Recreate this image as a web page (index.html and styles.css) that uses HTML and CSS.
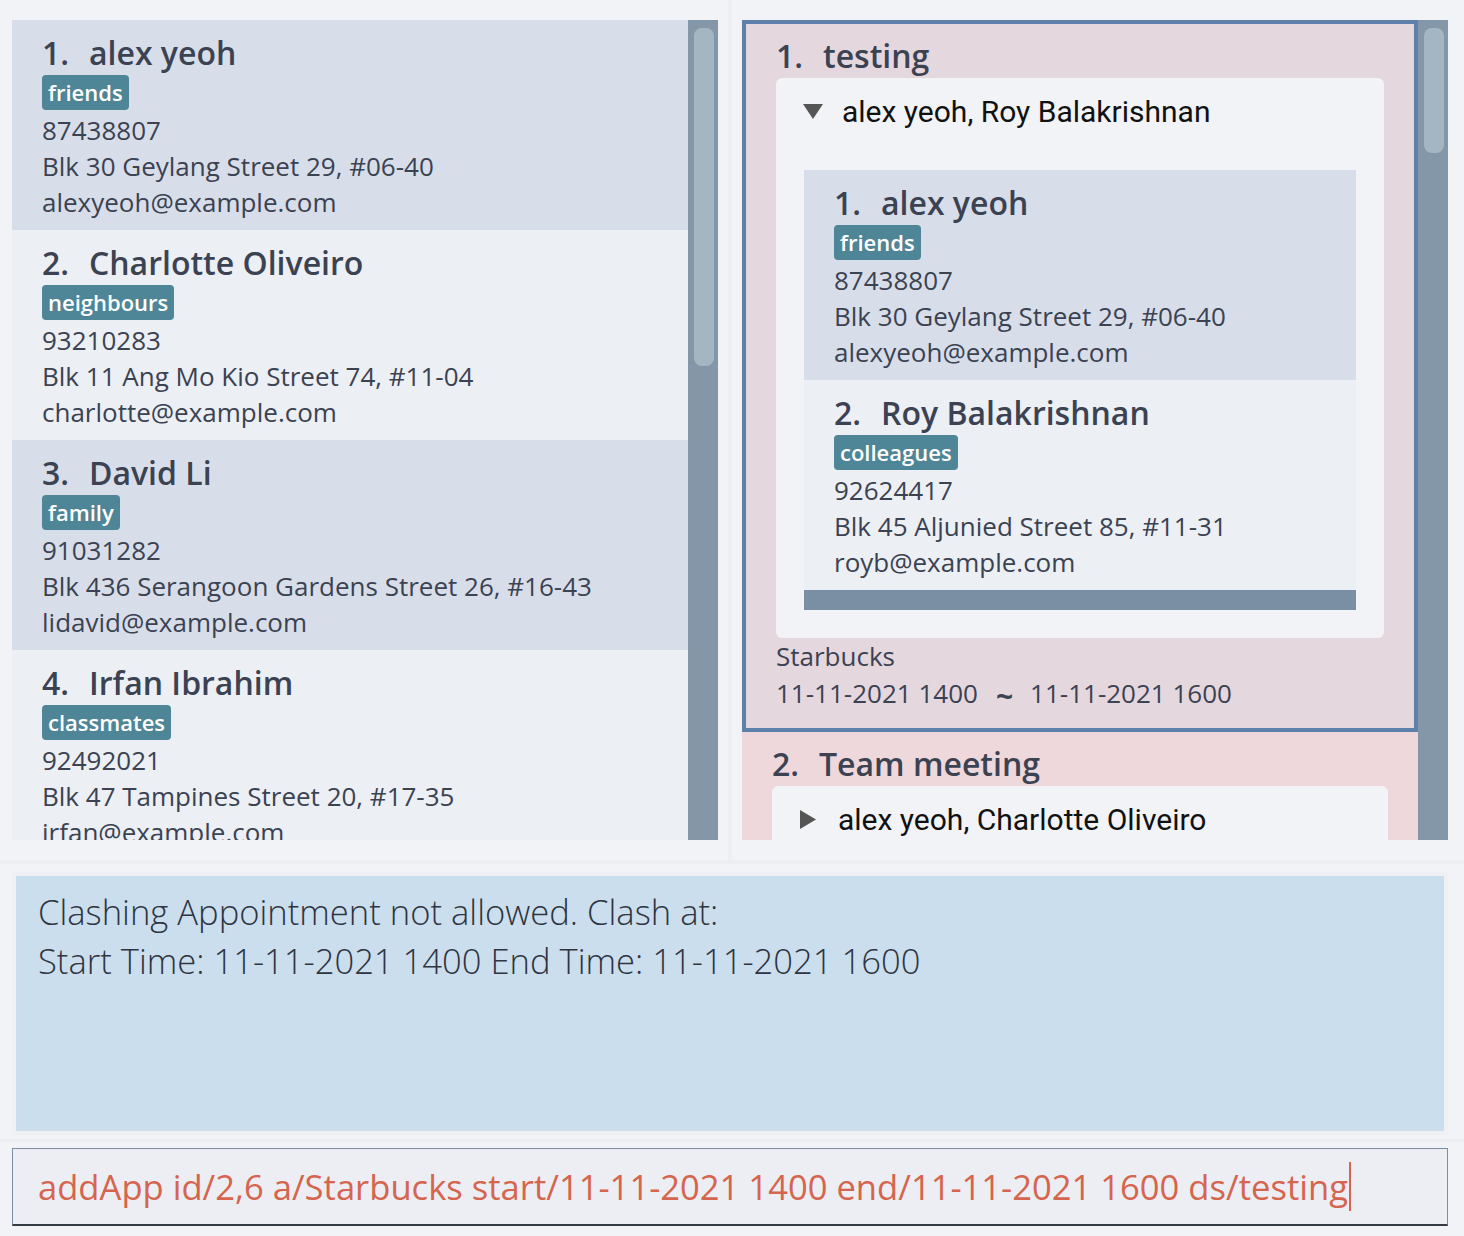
FILE: index.html
```html
<!DOCTYPE html>
<html>
<head>
<meta charset="utf-8">
<link rel="stylesheet" href="styles.css">
</head>
<body>
<div class="app">
  <div class="top">
    <div class="pane">
      <div class="list">
        <div class="card dark">
          <div class="name"><span class="idx">1.</span><span>alex yeoh</span></div>
          <span class="tag">friends</span>
          <div class="field">87438807</div>
          <div class="field">Blk 30 Geylang Street 29, #06-40</div>
          <div class="field">alexyeoh@example.com</div>
        </div>
        <div class="card light">
          <div class="name"><span class="idx">2.</span><span>Charlotte Oliveiro</span></div>
          <span class="tag">neighbours</span>
          <div class="field">93210283</div>
          <div class="field">Blk 11 Ang Mo Kio Street 74, #11-04</div>
          <div class="field">charlotte@example.com</div>
        </div>
        <div class="card dark">
          <div class="name"><span class="idx">3.</span><span>David Li</span></div>
          <span class="tag">family</span>
          <div class="field">91031282</div>
          <div class="field">Blk 436 Serangoon Gardens Street 26, #16-43</div>
          <div class="field">lidavid@example.com</div>
        </div>
        <div class="card light">
          <div class="name"><span class="idx">4.</span><span>Irfan Ibrahim</span></div>
          <span class="tag">classmates</span>
          <div class="field">92492021</div>
          <div class="field">Blk 47 Tampines Street 20, #17-35</div>
          <div class="field">irfan@example.com</div>
        </div>
      </div>
      <div class="vscroll"><div class="thumb thumb-left"></div></div>
    </div>
    <div class="divider"></div>
    <div class="pane">
      <div class="list">
        <div class="appt selected">
          <div class="appt-title"><span class="idx">1.</span><span>testing</span></div>
          <div class="group">
            <div class="group-head">
              <svg class="tri-down" width="20" height="15" viewBox="0 0 20 15"><polygon points="0,0 20,0 10,15" fill="#555"/></svg>
              <span class="members">alex yeoh, Roy Balakrishnan</span>
            </div>
            <div class="nested">
              <div class="card dark">
                <div class="name"><span class="idx">1.</span><span>alex yeoh</span></div>
                <span class="tag">friends</span>
                <div class="field">87438807</div>
                <div class="field">Blk 30 Geylang Street 29, #06-40</div>
                <div class="field">alexyeoh@example.com</div>
              </div>
              <div class="card light">
                <div class="name"><span class="idx">2.</span><span>Roy Balakrishnan</span></div>
                <span class="tag">colleagues</span>
                <div class="field">92624417</div>
                <div class="field">Blk 45 Aljunied Street 85, #11-31</div>
                <div class="field">royb@example.com</div>
              </div>
              <div class="hscroll"></div>
            </div>
          </div>
          <div class="appt-line">Starbucks</div>
          <div class="appt-line">11-11-2021 1400<span class="tilde">~</span>11-11-2021 1600</div>
        </div>
        <div class="appt second">
          <div class="appt-title"><span class="idx">2.</span><span>Team meeting</span></div>
          <div class="group">
            <div class="group-head">
              <svg class="tri-right" width="16" height="19" viewBox="0 0 16 19"><polygon points="0,0 16,9.5 0,19" fill="#555"/></svg>
              <span class="members">alex yeoh, Charlotte Oliveiro</span>
            </div>
          </div>
        </div>
      </div>
      <div class="vscroll"><div class="thumb thumb-right"></div></div>
    </div>
  </div>
  <div class="hdivider"></div>
  <div class="result-wrap">
    <div class="result">
      <div>Clashing Appointment not allowed. Clash at:</div>
      <div>Start Time: 11-11-2021 1400 End Time: 11-11-2021 1600</div>
    </div>
  </div>
  <div class="hdivider2"></div>
  <div class="cmd">
    <span class="cmd-text">addApp id/2,6 a/Starbucks start/11-11-2021 1400 end/11-11-2021 1600 ds/testing</span><span class="caret"></span>
  </div>
</div>
</body>
</html>
```

FILE: styles.css
```css
html, body {
  margin: 0;
  padding: 0;
}
body {
  background: #f2f3f7;
  font-family: "Open Sans", "Noto Sans", sans-serif;
  color: #3b4252;
}
.app {
  width: 1464px;
  height: 1236px;
  overflow: hidden;
}
.top {
  display: flex;
  height: 860px;
  padding-left: 12px;
  box-sizing: border-box;
}
.pane {
  display: flex;
  width: 706px;
  height: 820px;
  margin-top: 20px;
}
.list {
  width: 676px;
  height: 820px;
  overflow: hidden;
}
.vscroll {
  width: 30px;
  height: 820px;
  background: #8497a9;
  padding: 8px 4px 0 6px;
  box-sizing: border-box;
}
.thumb {
  background: #a5b6c3;
  border-radius: 8px;
}
.thumb-left { height: 338px; }
.thumb-right { height: 125px; }
.divider {
  width: 4px;
  margin: 0 10px;
  background: #eceef3;
}

/* person card */
.card {
  height: 210px;
  box-sizing: border-box;
  padding: 12px 30px 0;
  color: #3b4252;
}
.card.dark { background: #d8dee9; }
.card.light { background: #eceff4; }
.name {
  display: flex;
  font-size: 32px;
  font-weight: 600;
  line-height: 42px;
  height: 42px;
  white-space: nowrap;
}
.idx {
  display: inline-block;
  width: 47px;
}
.tag {
  display: inline-block;
  margin-top: 1px;
  margin-bottom: 2px;
  height: 35px;
  line-height: 35px;
  padding: 0 6px;
  background: #4e8597;
  color: #ffffff;
  font-size: 22px;
  font-weight: 600;
  border-radius: 4px;
  vertical-align: top;
}
.field {
  font-size: 26px;
  line-height: 36px;
  white-space: nowrap;
}

/* appointments */
.appt {
  padding: 0 30px;
  box-sizing: border-box;
}
.appt.selected {
  background: #e5d7de;
  border: 4px solid #5e81ac;
  padding-bottom: 17px;
}
.appt.second {
  background: #eed8dc;
  height: 200px;
}
.appt-title {
  display: flex;
  padding-top: 10px;
  font-size: 32px;
  font-weight: 600;
  line-height: 44px;
  height: 44px;
  white-space: nowrap;
}
.group {
  background: #f2f3f7;
  border-radius: 6px;
  padding-bottom: 28px;
}
.group-head {
  display: flex;
  align-items: center;
  height: 66px;
  padding-left: 27px;
  font-family: Roboto, "Liberation Sans", sans-serif;
  font-size: 30px;
  color: #111111;
  white-space: nowrap;
}
.tri-down { margin-right: 19px; }
.tri-right { margin-left: 1px; margin-right: 22px; }
.nested {
  margin: 26px 28px 0;
}
.hscroll {
  height: 20px;
  background: #7a8fa3;
}
.appt-line {
  font-size: 26px;
  line-height: 36px;
  white-space: nowrap;
}
.tilde {
  display: inline-block;
  margin: 0 17px 0 18px;
  font-size: 30px;
  font-weight: 700;
  position: relative;
  top: 4px;
  line-height: 36px;
}

/* bottom */
.hdivider {
  height: 4px;
  background: #eceef2;
}
.result-wrap {
  margin: 8px 16px 0 12px;
  padding: 4px;
  background: #eef0f4;
}
.result {
  height: 255px;
  background: #cbdeed;
  box-sizing: border-box;
  padding: 11px 22px 0;
  font-size: 34.6px;
  font-weight: 300;
  line-height: 49px;
  color: #2e3440;
  white-space: nowrap;
}
.hdivider2 {
  height: 3px;
  margin-top: 4px;
  background: #eceef2;
}
.cmd {
  margin: 6px 16px 0 12px;
  height: 78px;
  box-sizing: border-box;
  background: #eceef3;
  border: 1px solid #7a8fa3;
  border-bottom: 2px solid #333a44;
  padding-left: 25px;
  display: flex;
  align-items: center;
}
.cmd-text {
  font-size: 34.6px;
  color: #d5654e;
  white-space: nowrap;
  line-height: 50px;
}
.caret {
  display: inline-block;
  width: 2px;
  height: 49px;
  background: #d5654e;
  margin-left: 1px;
}
```
